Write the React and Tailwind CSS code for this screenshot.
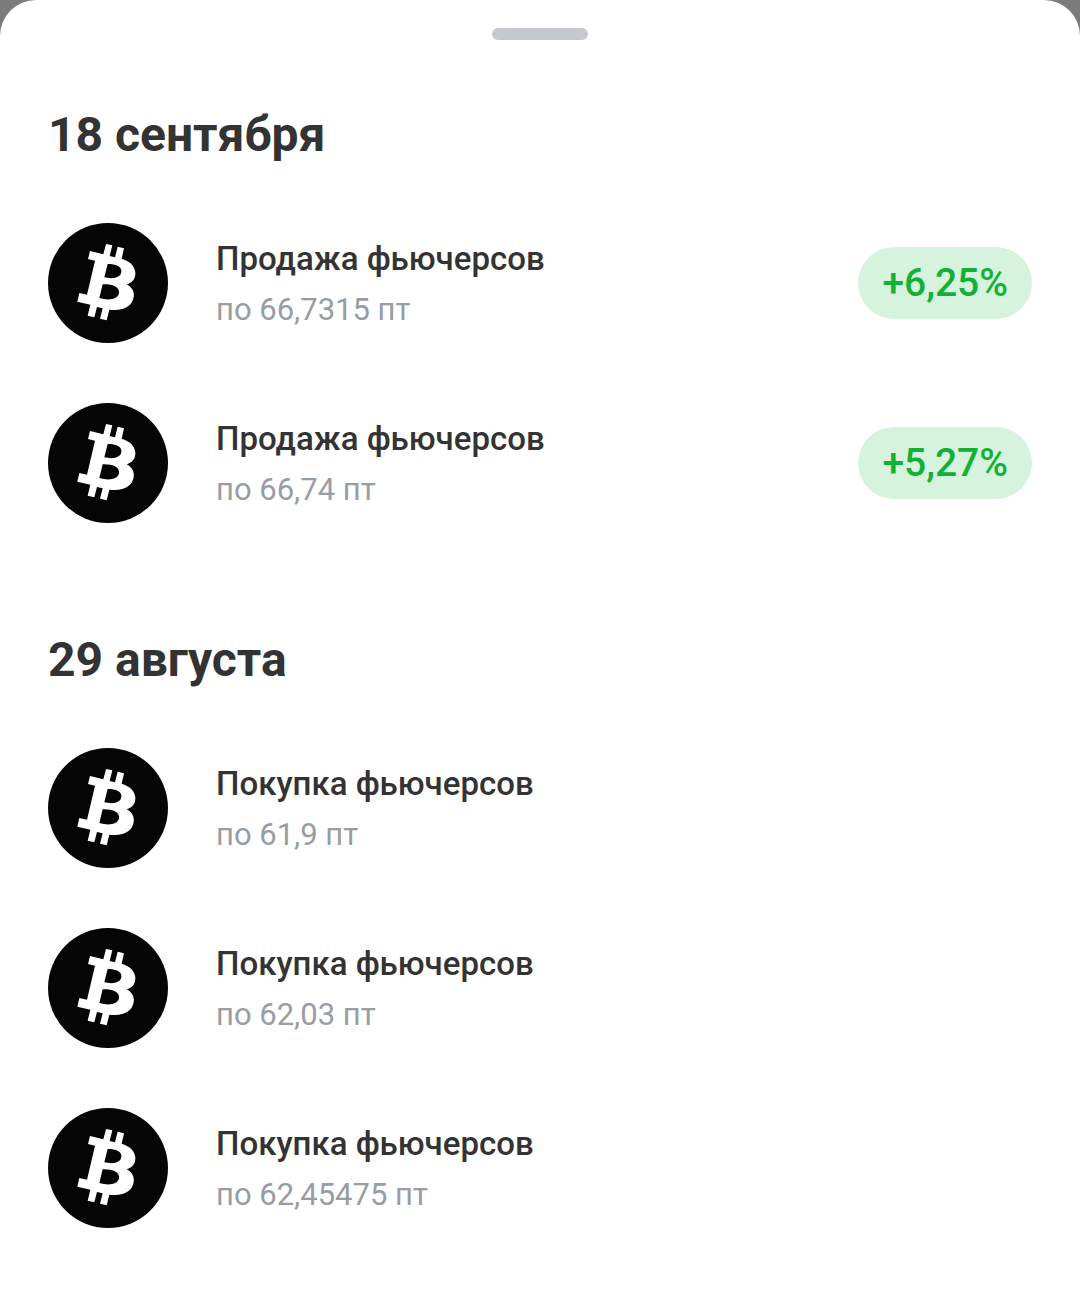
import React from 'react';

const groups = [
  {
    date: '18 сентября',
    operations: [
      { title: 'Продажа фьючерсов', price: 'по 66,7315 пт', profit: '+6,25%' },
      { title: 'Продажа фьючерсов', price: 'по 66,74 пт', profit: '+5,27%' },
    ],
  },
  {
    date: '29 августа',
    operations: [
      { title: 'Покупка фьючерсов', price: 'по 61,9 пт' },
      { title: 'Покупка фьючерсов', price: 'по 62,03 пт' },
      { title: 'Покупка фьючерсов', price: 'по 62,45475 пт' },
    ],
  },
];

const BitcoinIcon = () => (
  <svg viewBox="24 24 360 360" className="w-[120px] h-[120px] shrink-0" aria-hidden="true">
    <circle cx="204" cy="204" r="180" fill="#050505" />
    <path
      fill="#fff"
      fillRule="evenodd"
      d="M150 108L190 118L198 87L217 91L209 123L225 127L233 95L252 100L245 131C268 138 284 151 286 172C287 191 277 203 260 208C275 216 284 229 281 247C276 275 251 289 208 284L200 316L180 311L188 280L171 276L163 307L143 302L151 269L112 260L118 234L141 239L165 137L144 132ZM203 147L193 187C220 193 242 188 244 171C246 155 229 147 203 147ZM188 208L178 249C208 258 234 252 237 235C240 216 218 207 188 208Z"
    />
  </svg>
);

const Operation = ({ title, price, profit }) => (
  <li className="flex items-center">
    <BitcoinIcon />
    <div className="ml-12 flex-1 pt-0.5">
      <p className="text-[33px] leading-[52px] font-medium text-[#333333]">{title}</p>
      <p className="text-[31px] leading-[50px] text-[#989da3]">{price}</p>
    </div>
    {profit && (
      <span className="rounded-full bg-[#d6f3de] px-6 text-[39px] leading-[72px] font-medium text-[#12b136]">
        {profit}
      </span>
    )}
  </li>
);

export default function App() {
  return (
    <div className="min-h-screen bg-[#7b7b7b] font-[Roboto,sans-serif]">
      <main className="min-h-screen rounded-t-[36px] bg-white px-12 pt-7 pb-[61px]">
        {/* Drag handle */}
        <div className="mx-auto h-3 w-24 rounded-full bg-[#c5c8cd]" />

        <div className="mt-[67px] flex flex-col gap-[109px]">
          {groups.map((group) => (
            <section key={group.date}>
              <h2 className="text-[48px] leading-[56px] font-bold text-[#333333]">{group.date}</h2>
              <ul className="mt-[60px] flex flex-col gap-[60px]">
                {group.operations.map((operation) => (
                  <Operation key={operation.price} {...operation} />
                ))}
              </ul>
            </section>
          ))}
        </div>
      </main>
    </div>
  );
}
